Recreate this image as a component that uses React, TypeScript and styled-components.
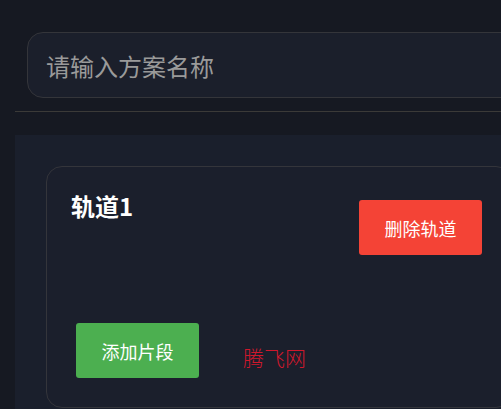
import styled, { createGlobalStyle } from "styled-components";

const GlobalStyle = createGlobalStyle`
  html, body {
    margin: 0;
    padding: 0;
    background: #161922;
    overflow: hidden;
  }
  body {
    font-family: "Noto Sans CJK SC", "Noto Sans", sans-serif;
    color: #ffffff;
  }
`;

const Page = styled.div`
  width: 543px;
  padding-left: 15px;
  box-sizing: border-box;
`;

const Heading = styled.h1`
  margin: -27px 0 0;
  height: 28px;
  padding-right: 24px;
  font-size: 24px;
  line-height: 28px;
  font-weight: 700;
  text-align: center;
  color: #c9cbd1;
`;

const NameInput = styled.input`
  display: block;
  box-sizing: border-box;
  width: 490px;
  height: 66px;
  margin: 31px 0 0 12px;
  padding: 0 18px;
  background: #1b1f2b;
  border: 1px solid #34353a;
  border-radius: 16px;
  font-family: inherit;
  font-size: 24px;
  color: #e6e6e6;
  outline: none;

  &::placeholder {
    color: #9a9a9a;
  }
`;

const Divider = styled.hr`
  margin: 13px 0 0;
  border: none;
  height: 1px;
  background: #3b3a38;
`;

const Panel = styled.section`
  margin-top: 23px;
  padding: 31px;
  background: #1a1f2c;
  min-height: 400px;
`;

const TrackCard = styled.div`
  border: 1px solid #34353b;
  border-radius: 16px;
  padding: 24px;
  background: #1b1f2c;
`;

const TrackHeader = styled.div`
  display: flex;
  justify-content: space-between;
  align-items: flex-start;
`;

const TrackTitle = styled.h3`
  margin: 0;
  font-size: 24px;
  line-height: 29px;
  font-weight: 700;
  color: #ffffff;
`;

const Button = styled.button<{ $tone: "danger" | "success" }>`
  box-sizing: border-box;
  width: 123px;
  height: 55px;
  margin: 5px;
  border: none;
  border-radius: 3px;
  background: ${(p) => (p.$tone === "danger" ? "#f44336" : "#4caf50")};
  color: #ffffff;
  font-family: inherit;
  font-size: 18px;
  cursor: pointer;
`;

const DeleteButton = styled(Button)`
  margin-top: 9px;
`;

const Segments = styled.div`
  height: 58px;
`;

const TrackFooter = styled.div`
  display: flex;
  align-items: center;
`;

const Watermark = styled.span`
  margin: 12px 0 0 39px;
  font-size: 21px;
  line-height: 24px;
  color: #d0182c;
  font-weight: 300;
`;

export default function App() {
  return (
    <>
      <GlobalStyle />
      <Page>
        <Heading>多轨道音频方案编辑器设置</Heading>
        <NameInput placeholder="请输入方案名称" />
        <Divider />
        <Panel>
          <TrackCard>
            <TrackHeader>
              <TrackTitle>轨道1</TrackTitle>
              <DeleteButton $tone="danger">删除轨道</DeleteButton>
            </TrackHeader>
            <Segments />
            <TrackFooter>
              <Button $tone="success">添加片段</Button>
              <Watermark>腾飞网</Watermark>
            </TrackFooter>
          </TrackCard>
        </Panel>
      </Page>
    </>
  );
}
